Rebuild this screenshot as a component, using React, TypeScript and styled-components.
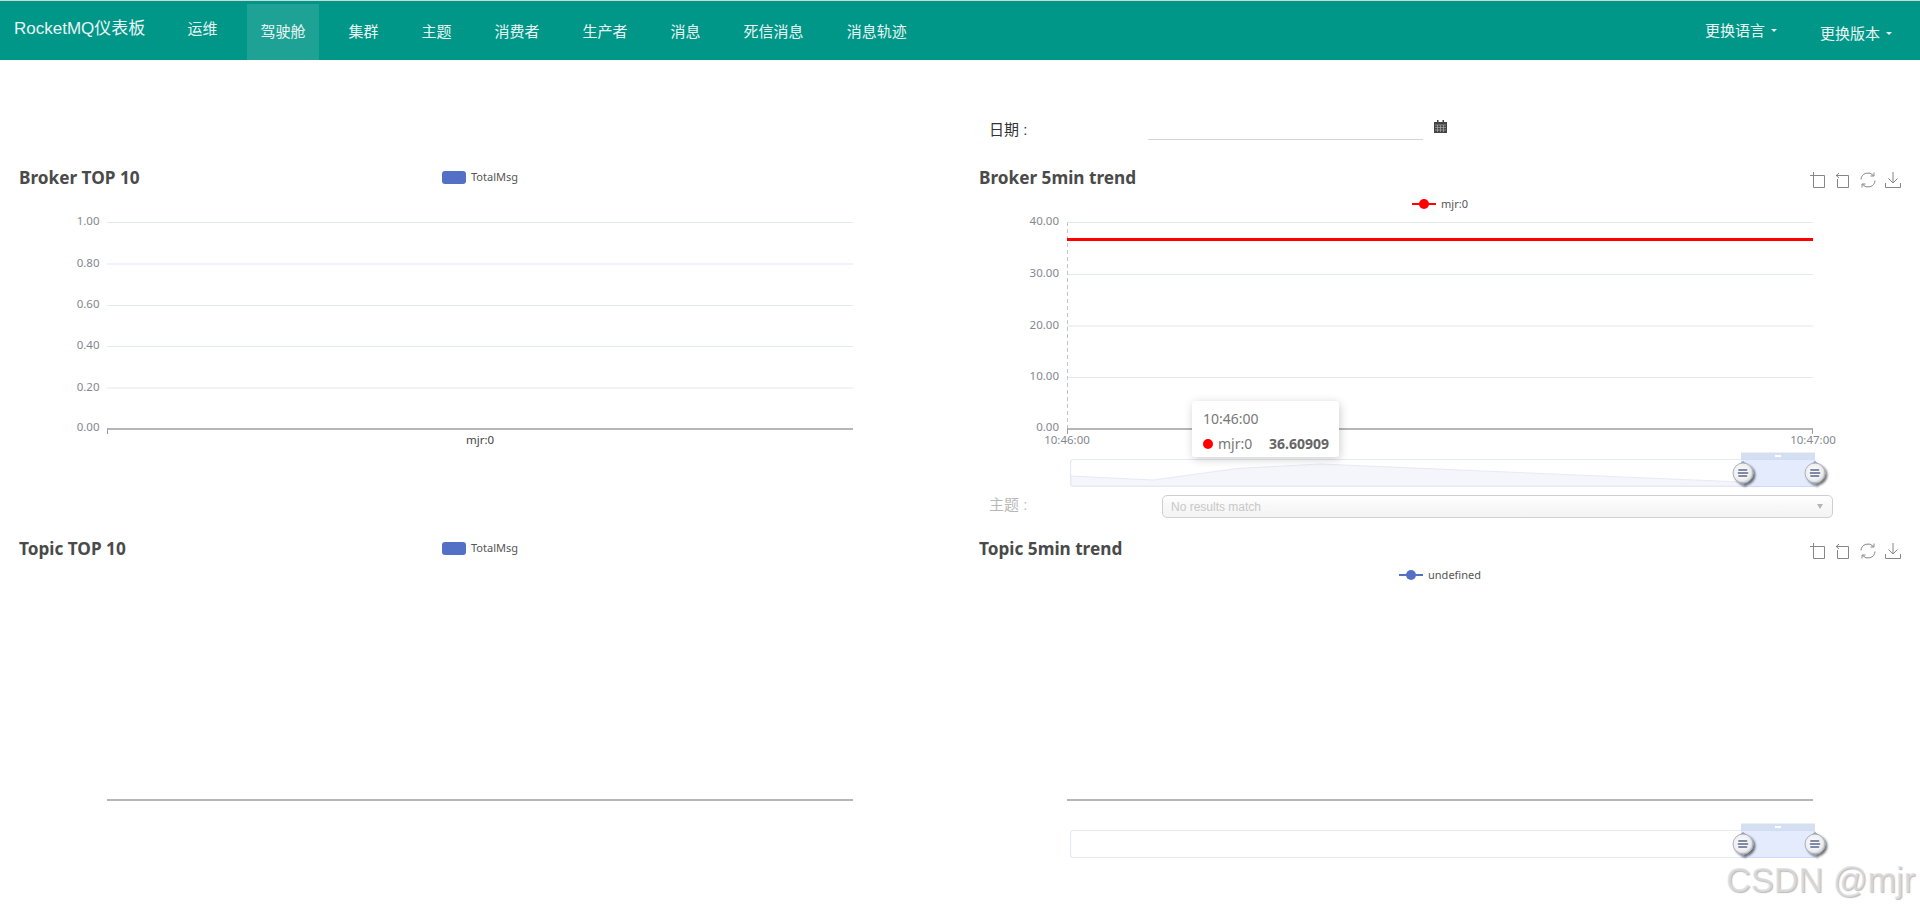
import React from "react";
import styled, { createGlobalStyle } from "styled-components";

const Global = createGlobalStyle`
  html, body { margin: 0; padding: 0; background: #fff; overflow: hidden; height: 100%; }
  * { box-sizing: border-box; }
  body { font-family: "Liberation Sans", "Noto Sans CJK SC", sans-serif; }
`;

const Page = styled.div`
  position: relative;
  width: 1920px;
  height: 912px;
  overflow: hidden;
`;

const Navbar = styled.nav`
  display: flex;
  align-items: flex-start;
  height: 60px;
  padding-right: 28px;
  background: #009688;
  border-top: 1px solid #cfd8d6;
  color: #e9f5f3;
  font-size: 15px;
`;

const Brand = styled.div`
  width: 174px;
  padding-left: 14px;
  font-size: 17px;
  line-height: 56px;
`;

const NavItem = styled.div<{ $active?: boolean; $flush?: boolean }>`
  height: 56px;
  margin-top: ${(p) => (p.$flush ? 0 : 3)}px;
  margin-right: 16px;
  padding: 0 13.5px;
  line-height: 56px;
  white-space: nowrap;
  background: ${(p) => (p.$active ? "rgba(255,255,255,.12)" : "transparent")};
`;

const NavSpacer = styled.div`
  flex: 1;
`;

const NavDrop = styled.div<{ $flush?: boolean }>`
  display: flex;
  align-items: center;
  gap: 6px;
  height: 56px;
  margin-top: ${(p) => (p.$flush ? 0 : 3)}px;
  margin-left: ${(p) => (p.$flush ? 0 : 43)}px;
  white-space: nowrap;
`;

const Caret = styled.span`
  width: 0;
  height: 0;
  margin-top: 2px;
  border-left: 3px solid transparent;
  border-right: 3px solid transparent;
  border-top: 3px solid #e9f5f3;
`;

const Columns = styled.main`
  display: flex;
`;

const Column = styled.section`
  width: 960px;
`;

const TopSpacer = styled.div`
  height: 100px;
`;

const DateRow = styled.div`
  display: flex;
  align-items: flex-start;
  height: 100px;
  padding: 54px 0 0 29px;
  color: #333;
  font-size: 15px;
`;

const DateLabel = styled.label`
  width: 159px;
  margin-top: 6px;
  line-height: 20px;
`;

const DateInput = styled.div`
  width: 275px;
  height: 26px;
  border-bottom: 1px solid #d5d5d5;
`;

const CalendarWrap = styled.span`
  margin: 6px 0 0 11px;
  line-height: 0;
`;

const Panel = styled.article<{ $height: number }>`
  position: relative;
  height: ${(p) => p.$height}px;
`;

const PanelHead = styled.header`
  display: grid;
  grid-template-columns: 1fr auto 1fr;
  align-items: center;
  height: 36px;
  padding-bottom: 2px;
`;

const Title = styled.h2`
  margin: 2px 0 0;
  padding-left: 19px;
  color: #4a4a4a;
  font: 700 17.2px/1 "Noto Sans", "Noto Sans CJK SC", sans-serif;
`;

const Legend = styled.div`
  display: flex;
  align-items: center;
  justify-content: center;
  gap: 5px;
  height: 12px;
  color: #555;
  font: 11px/12px "Noto Sans", sans-serif;
`;

const CenterLegendRow = styled.div`
  display: flex;
  justify-content: center;
  height: 16px;
  padding-top: 2px;
`;

const Swatch = styled.span`
  width: 24px;
  height: 13px;
  border-radius: 3px;
  background: #5470c6;
`;

const Toolbox = styled.div`
  grid-column: 3;
  display: flex;
  justify-content: flex-end;
  gap: 9px;
  margin: 5px 19px 0 0;
  line-height: 0;
`;

const Chart = styled.svg`
  display: block;
  font-family: "Noto Sans", sans-serif;
`;

const Tooltip = styled.div`
  position: absolute;
  left: 232px;
  top: 241px;
  display: flex;
  flex-direction: column;
  gap: 8px;
  width: 147px;
  height: 56px;
  padding: 9px 10px 0 11px;
  background: #fff;
  border-radius: 3px;
  box-shadow: 1px 2px 10px rgba(0, 0, 0, .2);
  color: #777;
  font: 14px/17px "Noto Sans", sans-serif;
`;

const TipTime = styled.div`
  color: #777;
`;

const TipRow = styled.div`
  display: flex;
  align-items: center;
`;

const TipDot = styled.span`
  width: 10px;
  height: 10px;
  margin-right: 5px;
  border-radius: 50%;
  background: #f00;
`;

const TipValue = styled.b`
  margin-left: auto;
  color: #666;
`;

const SelectRow = styled.div`
  display: flex;
  align-items: flex-start;
  height: 36px;
  padding-left: 29px;
`;

const SelectLabel = styled.label`
  width: 173px;
  color: #b9b9b9;
  font-size: 15px;
  line-height: 20px;
`;

const Select = styled.div`
  position: relative;
  width: 671px;
  height: 23px;
  padding-left: 8px;
  border: 1px solid #cfcfcf;
  border-radius: 5px;
  background: linear-gradient(#fff 0%, #f8f8f8 50%, #f4f4f4 100%);
  color: #c8c8c8;
  font-size: 12px;
  line-height: 22px;
`;

const SelectArrow = styled.span`
  position: absolute;
  right: 9px;
  top: 8px;
  width: 0;
  height: 0;
  border-left: 3.5px solid transparent;
  border-right: 3.5px solid transparent;
  border-top: 5px solid #b5b5b5;
`;

const Watermark = styled.div`
  position: absolute;
  left: 1726px;
  top: 859px;
  color: rgba(222, 222, 222, .75);
  font-size: 34.3px;
  line-height: 42px;
  white-space: nowrap;
  text-shadow: 1px 1px 1px rgba(120, 120, 120, .5);
`;

const GRID = "#e3e7f1";
const AXIS = "#9c9ca3";
const LABEL = "#85878f";

function ToolIcons() {
  const s = { fill: "none", stroke: "#868686", strokeWidth: 1 };
  return (
    <Toolbox>
      <svg width="16" height="16" viewBox="0 0 16 16" {...s}>
        <path d="M0 3.5H14.5V15.5H3.5V0" />
      </svg>
      <svg width="16" height="16" viewBox="0 0 16 16" {...s}>
        <path d="M1 3.5H13.5V15.5H2.5V7M4 1L1.2 3.5L4 6" />
      </svg>
      <svg width="16" height="16" viewBox="0 0 16 16" {...s}>
        <path d="M1 7.5A7 7 0 0 1 13.4 3.5M15 8.5A7 7 0 0 1 2.6 12.5M14 0.5V4H10.5M2 15.5V12H5.5" />
      </svg>
      <svg width="16" height="16" viewBox="0 0 16 16" {...s}>
        <path d="M8 0V11M3.5 6.5L8 11L12.5 6.5M0.5 11V15.5H15.5V11" />
      </svg>
    </Toolbox>
  );
}

function Calendar() {
  return (
    <svg width="13" height="13" viewBox="0 0 13 13">
      <path d="M0 2H3V0H4.5V2H8.5V0H10V2H13V13H0Z" fill="#444" />
      <path d="M1 5H12M1 7.5H12M1 10H12M3.5 5V12M6.5 5V12M9.5 5V12" stroke="#aaa" strokeWidth=".7" />
    </svg>
  );
}

function Handle({ x, y }: { x: number; y: number }) {
  return (
    <g transform={`translate(${x} ${y})`} filter="url(#handleShadow)">
      <path d="M0 -12L3 -9.5H-3ZM0 12L3 9.5H-3Z" fill="#8e9ab0" />
      <circle r="10" fill="url(#handleFill)" stroke="#a9b1c0" strokeWidth="1" />
      <path d="M-4 -3H3.5M-4.5 0H4.5M-4 3H3.5" stroke="#7f8ba6" strokeWidth="1.8" strokeLinecap="round" />
    </g>
  );
}

function Slider({ top, area }: { top: number; area?: string }) {
  const h = 28;
  return (
    <g>
      <rect x="1070.5" y={top + 0.5} width="745" height={h - 1} rx="3" fill="#fff" stroke="#e4e9f8" strokeWidth="1.2" />
      {area && <path d={area} fill="#f4f6fb" stroke="#e6eaf6" strokeWidth="1" />}
      <rect x="1741" y={top} width="74" height={h} fill="#8fb0f7" opacity=".25" />
      <rect x="1741" y={top - 6.5} width="74" height="7" fill="#d5dff2" />
      <path d={`M1775 ${top - 3}H1781`} stroke="#fff" strokeWidth="2" />
      <Handle x={1743} y={top + 14} />
      <Handle x={1815} y={top + 14} />
    </g>
  );
}

function Defs() {
  return (
    <defs>
      <radialGradient id="handleFill" cx="45%" cy="45%" r="60%">
        <stop offset="0%" stopColor="#ffffff" />
        <stop offset="70%" stopColor="#eeeeee" />
        <stop offset="100%" stopColor="#b9bcc3" />
      </radialGradient>
      <filter id="handleShadow" x="-50%" y="-50%" width="200%" height="200%">
        <feDropShadow dx="2" dy="2" stdDeviation="1" floodColor="#000" floodOpacity=".55" />
      </filter>
    </defs>
  );
}

function BrokerTop() {
  const ticks = [
    ["1.00", 222],
    ["0.80", 263.5],
    ["0.60", 305],
    ["0.40", 346],
    ["0.20", 387.5],
  ] as const;
  return (
    <Chart width="960" height="299" viewBox="0 196 960 299">
      {ticks.map(([t, y]) => (
        <g key={t}>
          <path d={`M107 ${y + 0.5}H853`} stroke={GRID} />
          <text x="99.5" y={y + 3} textAnchor="end" fontSize="11.5" fill={LABEL}>{t}</text>
        </g>
      ))}
      <text x="99.5" y="431" textAnchor="end" fontSize="11.5" fill={LABEL}>0.00</text>
      <path d="M107 429H853" stroke={AXIS} strokeWidth="1.5" />
      <path d="M107.5 429V434" stroke={AXIS} />
      <text x="480" y="444" textAnchor="middle" fontSize="11.5" fill="#444">mjr:0</text>
    </Chart>
  );
}

function TopicTop() {
  return (
    <Chart width="960" height="345" viewBox="0 567 960 345">
      <path d="M107 800H853" stroke={AXIS} strokeWidth="1.5" />
    </Chart>
  );
}

function BrokerTrend() {
  const ticks = [
    ["40.00", 222],
    ["30.00", 274],
    ["20.00", 325.5],
    ["10.00", 377],
  ] as const;
  return (
    <Chart width="960" height="283" viewBox="960 212 960 283">
      <Defs />
      {ticks.map(([t, y]) => (
        <g key={t}>
          <path d={`M1067 ${y + 0.5}H1813`} stroke={GRID} />
          <text x="1059" y={y + 3} textAnchor="end" fontSize="11.5" fill={LABEL}>{t}</text>
        </g>
      ))}
      <text x="1059" y="431" textAnchor="end" fontSize="11.5" fill={LABEL}>0.00</text>
      <path d="M1067.5 222V429" stroke="#c4c4cb" strokeDasharray="4 3" />
      <path d="M1067 239.5H1813" stroke="#f00" strokeWidth="3" />
      <path d="M1067 429H1813" stroke={AXIS} strokeWidth="1.5" />
      <path d="M1067.5 429V434M1812.5 429V434" stroke={AXIS} />
      <text x="1067" y="444" textAnchor="middle" fontSize="11.5" fill={LABEL}>10:46:00</text>
      <text x="1813" y="444" textAnchor="middle" fontSize="11.5" fill={LABEL}>10:47:00</text>
      <Slider top={459} area="M1071 476L1153 480L1237 468.5L1320 464L1460 470L1600 476L1741 482V486H1071Z" />
    </Chart>
  );
}

function TopicTrend() {
  return (
    <Chart width="960" height="329" viewBox="960 583 960 329">
      <path d="M1067 800H1813" stroke={AXIS} strokeWidth="1.5" />
      <Slider top={830} />
    </Chart>
  );
}

function LineMarker({ color }: { color: string }) {
  return (
    <svg width="24" height="12" viewBox="0 0 24 12">
      <path d="M0 6H24" stroke={color} strokeWidth="2" />
      <circle cx="12" cy="6" r="5" fill={color} />
    </svg>
  );
}

const navItems = ["集群", "主题", "消费者", "生产者", "消息", "死信消息", "消息轨迹"];

export default function App() {
  return (
    <Page>
      <Global />
      <Navbar>
        <Brand>RocketMQ仪表板</Brand>
        <NavItem $flush>运维</NavItem>
        <NavItem $active>驾驶舱</NavItem>
        {navItems.map((n) => (
          <NavItem key={n}>{n}</NavItem>
        ))}
        <NavSpacer />
        <NavDrop $flush>更换语言<Caret /></NavDrop>
        <NavDrop>更换版本<Caret /></NavDrop>
      </Navbar>
      <Columns>
        <Column>
          <TopSpacer />
          <Panel $height={371}>
            <PanelHead>
              <Title>Broker TOP 10</Title>
              <Legend><Swatch />TotalMsg</Legend>
            </PanelHead>
            <BrokerTop />
          </Panel>
          <Panel $height={381}>
            <PanelHead>
              <Title>Topic TOP 10</Title>
              <Legend><Swatch />TotalMsg</Legend>
            </PanelHead>
            <TopicTop />
          </Panel>
        </Column>
        <Column>
          <DateRow>
            <DateLabel>日期 :</DateLabel>
            <DateInput />
            <CalendarWrap><Calendar /></CalendarWrap>
          </DateRow>
          <Panel $height={335}>
            <PanelHead>
              <Title>Broker 5min trend</Title>
              <ToolIcons />
            </PanelHead>
            <CenterLegendRow>
              <Legend><LineMarker color="#f00" />mjr:0</Legend>
            </CenterLegendRow>
            <BrokerTrend />
            <Tooltip>
              <TipTime>10:46:00</TipTime>
              <TipRow>
                <TipDot />mjr:0<TipValue>36.60909</TipValue>
              </TipRow>
            </Tooltip>
          </Panel>
          <SelectRow>
            <SelectLabel>主题 :</SelectLabel>
            <Select>No results match<SelectArrow /></Select>
          </SelectRow>
          <Panel $height={381}>
            <PanelHead>
              <Title>Topic 5min trend</Title>
              <ToolIcons />
            </PanelHead>
            <CenterLegendRow>
              <Legend><LineMarker color="#5470c6" />undefined</Legend>
            </CenterLegendRow>
            <TopicTrend />
          </Panel>
        </Column>
      </Columns>
      <Watermark>CSDN @mjr</Watermark>
    </Page>
  );
}
